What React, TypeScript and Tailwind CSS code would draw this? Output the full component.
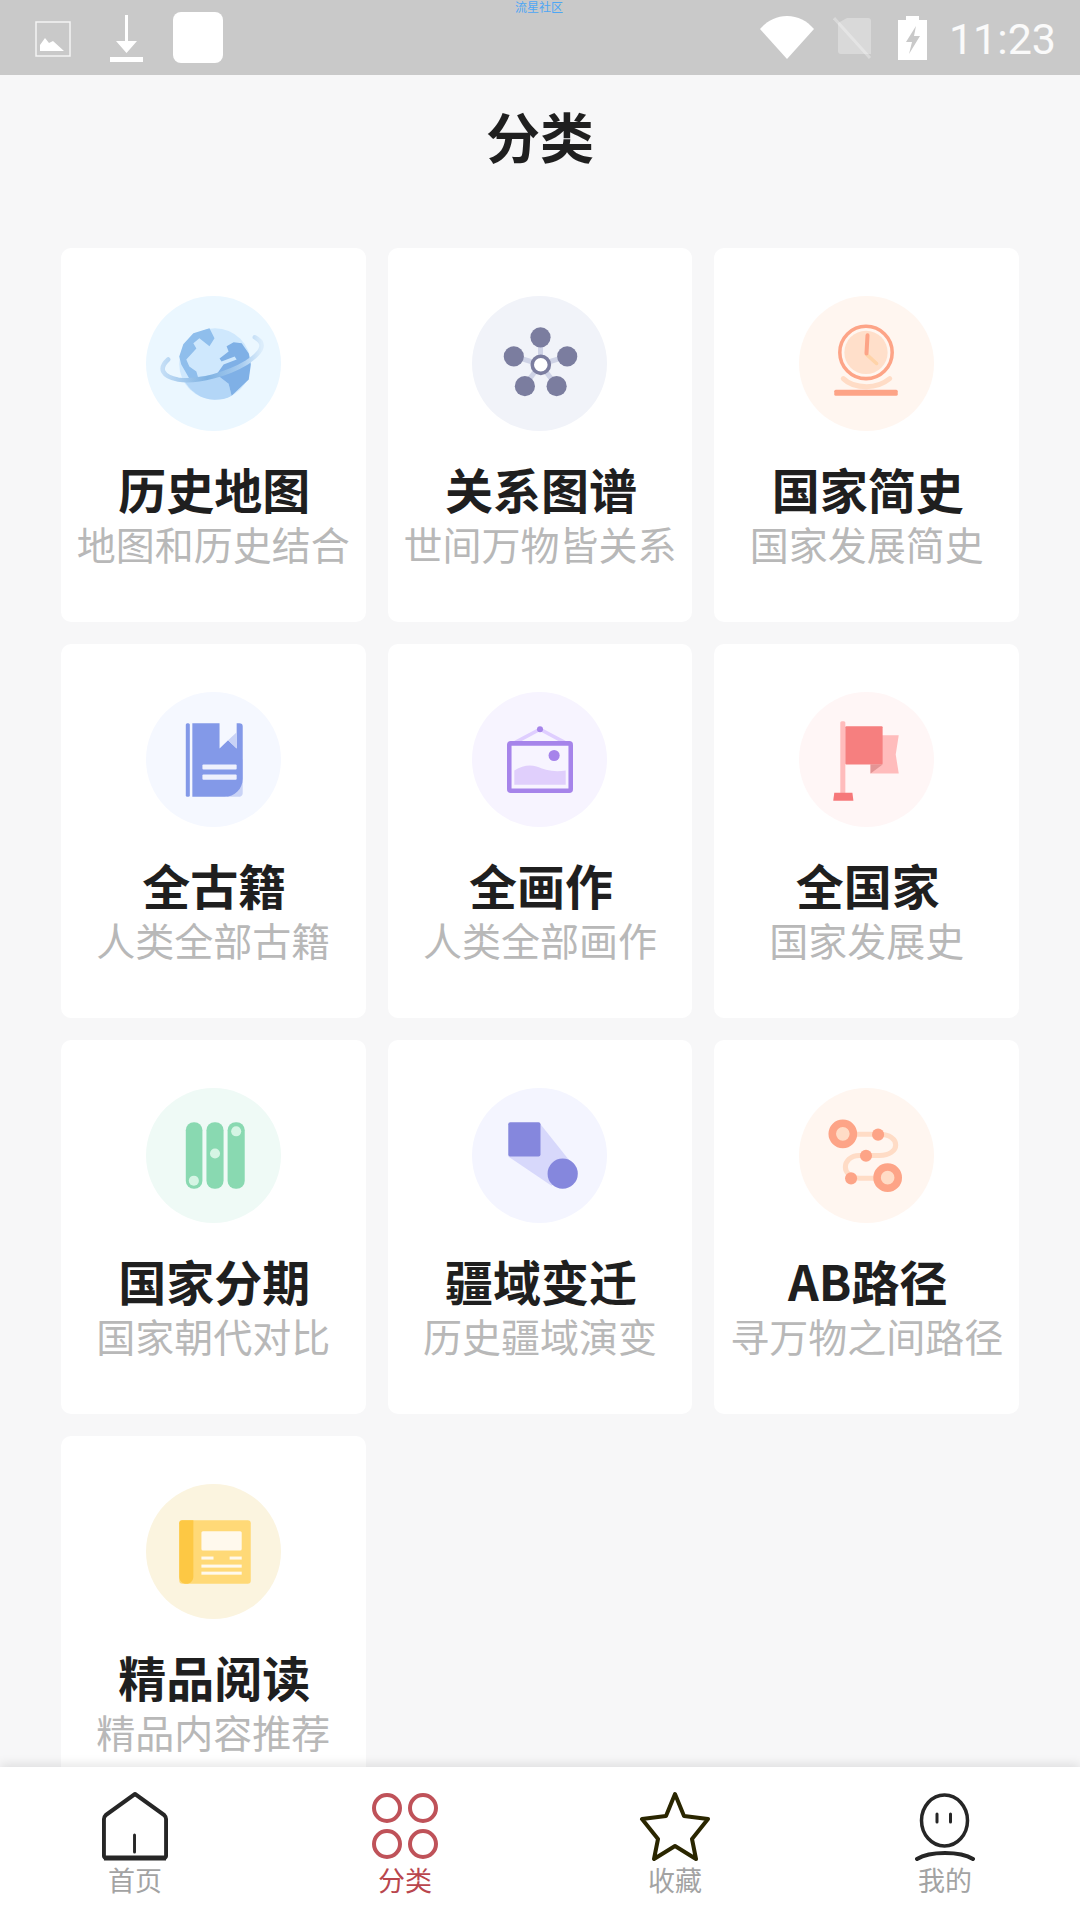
import { ReactNode } from "react";

function Globe() {
  return (
    <>
      <defs>
        <linearGradient id="ring" x1="0" y1="0" x2="1" y2="0">
          <stop offset="0" stopColor="#c4def6" />
          <stop offset="0.45" stopColor="#7fb2e2" />
          <stop offset="0.8" stopColor="#a9cdf0" />
          <stop offset="1" stopColor="#dcedfb" />
        </linearGradient>
      </defs>
      <circle cx="68.500" cy="67.500" r="35.500" fill="#cfe8fd" />
      <path d="M37 82c6 12 17 21 31 21 6 0 12-1 17-4l-3-12-12-9z" fill="#b3d6f7" />
      <path d="M63 32 68 42 63 50 53 42 47 47 50 52 40 63 43 70 50 75 52 82 43 82 35 68 33 60 37 48 47 37z" fill="#8fbeec" />
      <path d="M87 46 95 47 102 57 104 68 102 83 85 99 82 87 70 78 77 68 90 63 88 60 75 65 73 62 82 55 80 50z" fill="#7fb0e6" />
      <path d="M108 41C118 46 118 54 100 66 82 77 52 86 32 83 16 80 12 72 22 63" fill="none" stroke="url(#ring)" strokeWidth="4.500" strokeLinecap="round" />
    </>
  );
}

function Graph() {
  return (
    <>
      <path d="M68 68 68 41M68 68 42 60M68 68 94 60M68 68 52 89M68 68 84 89" stroke="#cfd3e6" strokeWidth="5" />
      <circle cx="68" cy="41" r="10" fill="#7b7d9f" />
      <circle cx="41.500" cy="60" r="10" fill="#7b7d9f" />
      <circle cx="94.500" cy="60" r="10" fill="#7b7d9f" />
      <circle cx="52.500" cy="89.500" r="10" fill="#7b7d9f" />
      <circle cx="84" cy="89.500" r="10" fill="#7b7d9f" />
      <circle cx="68.300" cy="68.300" r="8.500" fill="#fff" stroke="#7b7d9f" strokeWidth="3.500" />
    </>
  );
}

function Clock() {
  return (
    <>
      <circle cx="66.500" cy="56" r="21.500" fill="#ffdfca" />
      <circle cx="66.500" cy="56" r="26" fill="none" stroke="#fda487" strokeWidth="3.500" />
      <path d="M67 58 77 67" stroke="#ffd3a8" strokeWidth="3.500" strokeLinecap="round" />
      <path d="M68 39 67 57" stroke="#fda487" strokeWidth="4" strokeLinecap="round" />
      <path d="M44 82c5 5 13 8 23 8s17-3 23-8" fill="none" stroke="#ffdcc6" strokeWidth="5" strokeLinecap="round" />
      <rect x="35" y="93" width="63" height="6" rx="1.500" fill="#fda487" />
    </>
  );
}

function Book() {
  return (
    <>
      <rect x="39.500" y="31" width="4" height="73" rx="1.500" fill="#8399e8" />
      <path d="M86 104h6c3 0 4-2 4-4V66L80 104z" fill="#c9d3f6" />
      <path d="M46 31h27v25l8.500-8 8.500 8V31h2.500c2.500 0 3.500 1 3.500 3v52c0 10-8 18-18 18H46z" fill="#8399e8" />
      <path d="M81.500 48 90 40v16z" fill="#c9d3f6" />
      <rect x="56" y="72" width="34" height="5" rx="1" fill="#eef1fd" />
      <rect x="56" y="82" width="34" height="5" rx="1" fill="#eef1fd" />
    </>
  );
}

function Frame() {
  return (
    <>
      <path d="M43 50 67.500 37 92 50" fill="none" stroke="#dfceff" strokeWidth="3.500" />
      <circle cx="67.500" cy="37" r="3" fill="#a684ea" />
      <rect x="37" y="51" width="61" height="47" rx="1.500" fill="none" stroke="#a684ea" strokeWidth="4.500" />
      <circle cx="81.500" cy="63" r="5.500" fill="#a684ea" />
      <path d="M42 78c8-5 15-6 22-4 8 3 16 6 29 4v14H42z" fill="#e0cffc" />
    </>
  );
}

function Flag() {
  return (
    <>
      <rect x="41" y="29" width="5" height="74" rx="1.500" fill="#ffbcbc" />
      <path d="M34 108l1-8h18l1 8z" fill="#f6787a" />
      <path d="M71 43h28l-3 19 3 19H71z" fill="#ffbcbc" />
      <rect x="46" y="34" width="37" height="38" rx="1" fill="#f67f7f" />
      <path d="M71 72h12L71 81z" fill="#e39494" />
    </>
  );
}

function Bars() {
  return (
    <>
      <rect x="39.500" y="34" width="16.500" height="66" rx="8" fill="#89d9b1" />
      <rect x="60" y="34" width="17" height="66" rx="8" fill="#89d9b1" />
      <rect x="81" y="34" width="17" height="66" rx="8" fill="#89d9b1" />
      <circle cx="47.500" cy="92" r="5" fill="#d5f5e4" />
      <circle cx="68.500" cy="65" r="5" fill="#d5f5e4" />
      <circle cx="89.500" cy="43" r="5" fill="#d5f5e4" />
    </>
  );
}

function Shapes() {
  return (
    <>
      <path d="M68 36 103 80 79 97 36 68z" fill="#d7d8fb" />
      <rect x="36" y="34" width="32" height="34" rx="2" fill="#8587dd" />
      <circle cx="90" cy="85" r="15" fill="#8587dd" />
    </>
  );
}

function Route() {
  return (
    <>
      <path d="M45 46H80c10 0 16 5 16 10.500S90 67 80 67H60c-9 0-14 6-14 11.500S51 89.500 60 89.500H85" fill="none" stroke="#ffdcc6" strokeWidth="5" />
      <circle cx="43.500" cy="45.500" r="10.500" fill="#ffdcc6" stroke="#fda487" strokeWidth="7.500" />
      <circle cx="88" cy="89" r="10.500" fill="#ffdcc6" stroke="#fda487" strokeWidth="7.500" />
      <circle cx="78.500" cy="46.300" r="6" fill="#fda487" />
      <circle cx="66.500" cy="67.300" r="6" fill="#fda487" />
      <circle cx="51.700" cy="89.700" r="6" fill="#fda487" />
    </>
  );
}

function News() {
  return (
    <>
      <rect x="33" y="36" width="71" height="63" rx="3" fill="#ffd977" />
      <path d="M33 39c0-2 1-3 3-3h11v56c0 4-3 7-7 7s-7-3-7-7z" fill="#fdc844" />
      <rect x="55" y="47" width="40" height="19" rx="1.500" fill="#fff9ed" />
      <rect x="55" y="72" width="12" height="3" fill="#fff9ed" />
      <rect x="83" y="72" width="12" height="3" fill="#fff9ed" />
      <rect x="55" y="80" width="40" height="3" fill="#fff9ed" />
      <rect x="55" y="87" width="40" height="3" fill="#fff9ed" />
    </>
  );
}

type Item = { title: string; sub: string; bg: string; icon: ReactNode };

const items: Item[] = [
  { title: "历史地图", sub: "地图和历史结合", bg: "bg-[#ebf7ff]", icon: <Globe /> },
  { title: "关系图谱", sub: "世间万物皆关系", bg: "bg-[#f1f3f9]", icon: <Graph /> },
  { title: "国家简史", sub: "国家发展简史", bg: "bg-[#fff6f0]", icon: <Clock /> },
  { title: "全古籍", sub: "人类全部古籍", bg: "bg-[#f5f8ff]", icon: <Book /> },
  { title: "全画作", sub: "人类全部画作", bg: "bg-[#f7f4ff]", icon: <Frame /> },
  { title: "全国家", sub: "国家发展史", bg: "bg-[#fff6f6]", icon: <Flag /> },
  { title: "国家分期", sub: "国家朝代对比", bg: "bg-[#effaf6]", icon: <Bars /> },
  { title: "疆域变迁", sub: "历史疆域演变", bg: "bg-[#f4f5ff]", icon: <Shapes /> },
  { title: "AB路径", sub: "寻万物之间路径", bg: "bg-[#fff6f0]", icon: <Route /> },
  { title: "精品阅读", sub: "精品内容推荐", bg: "bg-[#fbf4df]", icon: <News /> },
];

function Card({ item }: { item: Item }) {
  return (
    <div className="h-[374px] rounded-[10px] bg-white pt-[48px] flex flex-col items-center">
      <div className={`w-[135px] h-[135px] rounded-full ${item.bg}`}>
        <svg viewBox="0 0 134 134" className="w-[135px] h-[135px]">
          {item.icon}
        </svg>
      </div>
      <div className="mt-[27px] pl-[2px] text-[48px] leading-[60px] font-bold text-[#1f1f1f] whitespace-nowrap">{item.title}</div>
      <div className="mt-[1px] text-[39px] leading-[48px] text-[#b8b8b8] whitespace-nowrap">{item.sub}</div>
    </div>
  );
}

function StatusBar() {
  return (
    <div className="relative h-[75px] shrink-0 bg-[#c9c9c9] flex items-center pl-[35px] pr-[24px]">
      <span className="absolute left-[515px] top-0 text-[12px] leading-[13px] text-[#4da6f5]">流星社区</span>
      <svg viewBox="0 0 36 36" className="w-[36px] h-[36px] mt-[2px]" fill="none">
        <rect x="1" y="1" width="34" height="34" stroke="#fff" strokeWidth="1.500" opacity=".8" />
        <path d="M4 30V24l5-7 4 5 4-2 11 10z" fill="#fff" transform="translate(1 0)" />
      </svg>
      <svg viewBox="0 0 34 48" className="w-[34px] h-[48px] ml-[39px] mt-[2px]" fill="#fff">
        <path d="M15 0h3v26h9L16.500 38 6 26h9z" />
        <rect x="0" y="42" width="33" height="5" />
      </svg>
      <div className="w-[50px] h-[51px] rounded-[8px] bg-white ml-[29px]" />
      <div className="flex-1" />
      <svg viewBox="0 0 54 43" className="w-[54px] h-[43px]" fill="#fff">
        <path d="M0 13C7 5 16 0 27 0s20 5 27 13L27 43z" />
      </svg>
      <svg viewBox="0 0 40 44" className="w-[40px] h-[44px] ml-[19px]">
        <path d="M14 2h21c2 0 3 1 3 3v33H8c-2 0-3-1-3-3V7z" fill="#fff" opacity=".3" />
        <path d="M1 2 37 42" stroke="#fff" strokeWidth="3" opacity=".3" />
      </svg>
      <svg viewBox="0 0 29 44" className="w-[29px] h-[44px] ml-[25px]">
        <path d="M8 0h13v4h8v40H0V4h8z" fill="#fff" />
        <path d="M18 10 8 26h6l-3 12 11-18h-6z" fill="#c9c9c9" />
      </svg>
      <span className="ml-[22px] mt-[2px] font-['Roboto',sans-serif] text-[43px] leading-[48px] text-white/90">11:23</span>
    </div>
  );
}

function NavItem({ label, active, children }: { label: string; active?: boolean; children: ReactNode }) {
  return (
    <div className="flex flex-col items-center">
      <div className="h-[74px] flex items-end justify-center">{children}</div>
      <span className={`mt-[2px] text-[27px] leading-[34px] ${active ? "text-[#b9464d]" : "text-[#a3a3a3]"}`}>{label}</span>
    </div>
  );
}

export default function App() {
  return (
    <div className="w-[1080px] h-[1920px] flex flex-col overflow-hidden bg-[#f7f7f8] font-['Noto_Sans_CJK_SC','Noto_Sans',sans-serif]">
      <StatusBar />
      <div className="flex-1 min-h-0 overflow-hidden">
        <div className="h-[173px] pt-[31px] text-center text-[54px] leading-[60px] font-bold text-[#1f1f1f]">分类</div>
        <div className="grid grid-cols-3 gap-[22px] pl-[61px] pr-[61px]">
          {items.map((item) => (
            <Card key={item.title} item={item} />
          ))}
        </div>
      </div>
      <div className="relative h-[153px] shrink-0 bg-white grid grid-cols-4 pt-[20px] shadow-[0_-3px_10px_rgba(0,0,0,0.1)]">
        <NavItem label="首页">
          <svg viewBox="0 0 68 70" preserveAspectRatio="none" className="w-[66px] h-[70px]" fill="none" stroke="#262626" strokeWidth="4" strokeLinejoin="round">
            <path d="M34 3 64 24c1 1 2 2 2 4v37c0 1-1 2-2 2H4c-1 0-2-1-2-2V28c0-2 1-3 2-4z" />
            <path d="M2 67h64" strokeWidth="5" />
            <path d="M33.500 44v17" strokeWidth="3" strokeLinecap="round" />
          </svg>
        </NavItem>
        <NavItem label="分类" active>
          <svg viewBox="0 0 68 70" className="w-[68px] h-[70px]" fill="none" stroke="#bf5259" strokeWidth="4">
            <circle cx="16" cy="17" r="13" />
            <circle cx="52" cy="17" r="13" />
            <circle cx="16" cy="53" r="13" />
            <circle cx="52" cy="53" r="13" />
          </svg>
        </NavItem>
        <NavItem label="收藏">
          <svg viewBox="0 0 72 70" className="w-[72px] h-[70px]" fill="none" stroke="#2a2600" strokeWidth="4" strokeLinejoin="round">
            <path d="M36 3 45 25 69 28 53 48 57 68 36 55 15 68 19 48 3 28 27 25z" />
          </svg>
        </NavItem>
        <NavItem label="我的">
          <svg viewBox="0 0 60 70" className="w-[60px] h-[70px]" fill="none" stroke="#262626" strokeWidth="3.500">
            <ellipse cx="29.500" cy="29.500" rx="23" ry="25.500" />
            <path d="M22 23v8M35.500 23v8" strokeWidth="3" strokeLinecap="round" />
            <path d="M2 68c8-5 18-6 28-6s20 1 28 6" strokeWidth="4" strokeLinecap="round" />
          </svg>
        </NavItem>
      </div>
    </div>
  );
}
